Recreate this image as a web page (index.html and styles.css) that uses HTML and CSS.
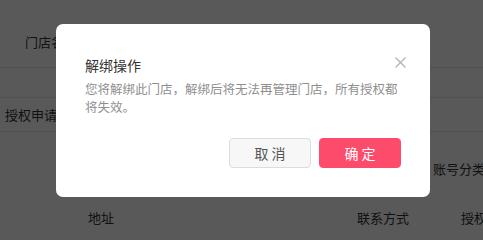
FILE: index.html
```html
<!DOCTYPE html>
<html lang="zh-CN">
<head>
<meta charset="utf-8">
<title>解绑操作</title>
<link rel="stylesheet" href="styles.css">
</head>
<body>
<div class="page">
  <div class="top"><span class="store-label">门店名称</span></div>
  <div class="gap-row"></div>
  <div class="tabs"><span class="tab">授权申请</span></div>
  <div class="filter"><span class="filter-label">账号分类</span></div>
  <div class="thead">
    <span class="col-addr">地址</span>
    <span class="col-contact">联系方式</span>
    <span class="col-auth">授权状态</span>
  </div>
</div>

<div class="mask">
  <div class="dialog" role="dialog">
    <button class="close" aria-label="关闭">
      <svg width="11" height="11" viewBox="0 0 11 11"><path d="M0.5 0.5L10.5 10.5M10.5 0.5L0.5 10.5" stroke="#b3b3b3" stroke-width="1.3" fill="none"/></svg>
    </button>
    <div class="title">解绑操作</div>
    <div class="body">您将解绑此门店，解绑后将无法再管理门店，所有授权都<br>将失效。</div>
    <div class="footer">
      <button class="btn btn-cancel">取消</button>
      <button class="btn btn-ok">确定</button>
    </div>
  </div>
</div>
</body>
</html>
```

FILE: styles.css
```css
html, body {
  margin: 0;
  padding: 0;
}
body {
  width: 483px;
  height: 234px;
  overflow: hidden;
  background: #fff;
  font-family: "Microsoft YaHei", "Noto Sans CJK SC", "Noto Sans", sans-serif;
  color: #333;
  font-size: 13px;
}
.page {
  width: 483px;
  height: 234px;
  background: #fff;
  overflow: hidden;
}
.top {
  height: 68px;
  border-bottom: 1px solid #e6e6e6;
  box-sizing: border-box;
  padding: 32px 0 0 25px;
  line-height: 20px;
}
.gap-row {
  height: 29px;
  border-bottom: 1px solid #e6e6e6;
}
.tabs {
  height: 34px;
  border-bottom: 1px solid #e6e6e6;
  box-sizing: border-box;
  padding: 7px 0 0 5px;
  line-height: 20px;
}
.filter {
  height: 50px;
  box-sizing: border-box;
  padding: 27px 0 0 433px;
  line-height: 20px;
  white-space: nowrap;
}
.thead {
  display: flex;
  padding: 26px 0 0 88px;
  line-height: 20px;
  white-space: nowrap;
}
.thead span {
  flex-shrink: 0;
}
.col-addr { width: 269px; }
.col-contact { width: 104px; }

.mask {
  position: fixed;
  inset: 0;
  background: rgba(0, 0, 0, 0.65);
  padding: 24px 0 0 56px;
  box-sizing: border-box;
}
.dialog {
  position: relative;
  width: 374px;
  height: 173px;
  box-sizing: border-box;
  background: #fff;
  border-radius: 7px;
  padding: 31px 29px 0 29px;
}
.close {
  position: absolute;
  top: 33px;
  right: 24px;
  width: 11px;
  height: 11px;
  padding: 0;
  border: 0;
  background: transparent;
  display: flex;
}
.title {
  font-size: 14px;
  line-height: 20px;
  color: #333;
}
.body {
  margin-top: 5px;
  font-size: 12.5px;
  line-height: 18px;
  color: #8f8f8f;
  white-space: nowrap;
}
.footer {
  margin-top: 22px;
  display: flex;
  justify-content: flex-end;
  gap: 8px;
}
.btn {
  width: 82px;
  height: 30px;
  border-radius: 4px;
  font-family: inherit;
  font-size: 14px;
  letter-spacing: 3px;
  padding: 0 0 0 3px;
  line-height: 28px;
  cursor: pointer;
}
.btn-cancel {
  background: #f7f7f7;
  border: 1px solid #dcdcdc;
  color: #555;
}
.btn-ok {
  background: #fd4b6b;
  border: 1px solid #fd4b6b;
  color: #fff;
}
```
